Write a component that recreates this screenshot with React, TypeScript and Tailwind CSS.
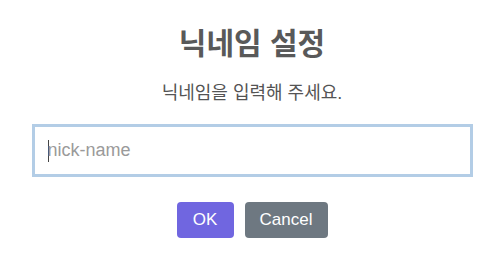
export default function App() {
  return (
    <div
      className="w-[500px] h-[258px] bg-white flex flex-col items-center pl-[4px]"
      style={{ fontFamily: '"Liberation Sans", "Noto Sans CJK KR", sans-serif' }}
    >
      {/* Title */}
      <h2 className="mt-[25px] text-[30px] leading-[38px] font-semibold text-[#595959]">
        닉네임 설정
      </h2>

      {/* Subtitle */}
      <p className="mt-[18px] text-[18px] leading-[24px] text-[#545454]">
        닉네임을 입력해 주세요.
      </p>

      {/* Input */}
      <div className="mt-[19px] w-[441px] h-[53px] border-[3px] border-[#b3cde6] flex items-center pl-[13px]">
        <span className="w-px h-[22px] bg-[#444]" />
        <span className="text-[18px] text-[#9a9a9a] -ml-px">nick-name</span>
      </div>

      {/* Buttons */}
      <div className="mt-[25px] flex gap-[11px]">
        <button className="w-[57px] h-[36px] rounded-[4px] bg-[#7066e0] text-white text-[17px]">
          OK
        </button>
        <button className="w-[83px] h-[36px] rounded-[4px] bg-[#6e7881] text-white text-[17px]">
          Cancel
        </button>
      </div>
    </div>
  );
}
